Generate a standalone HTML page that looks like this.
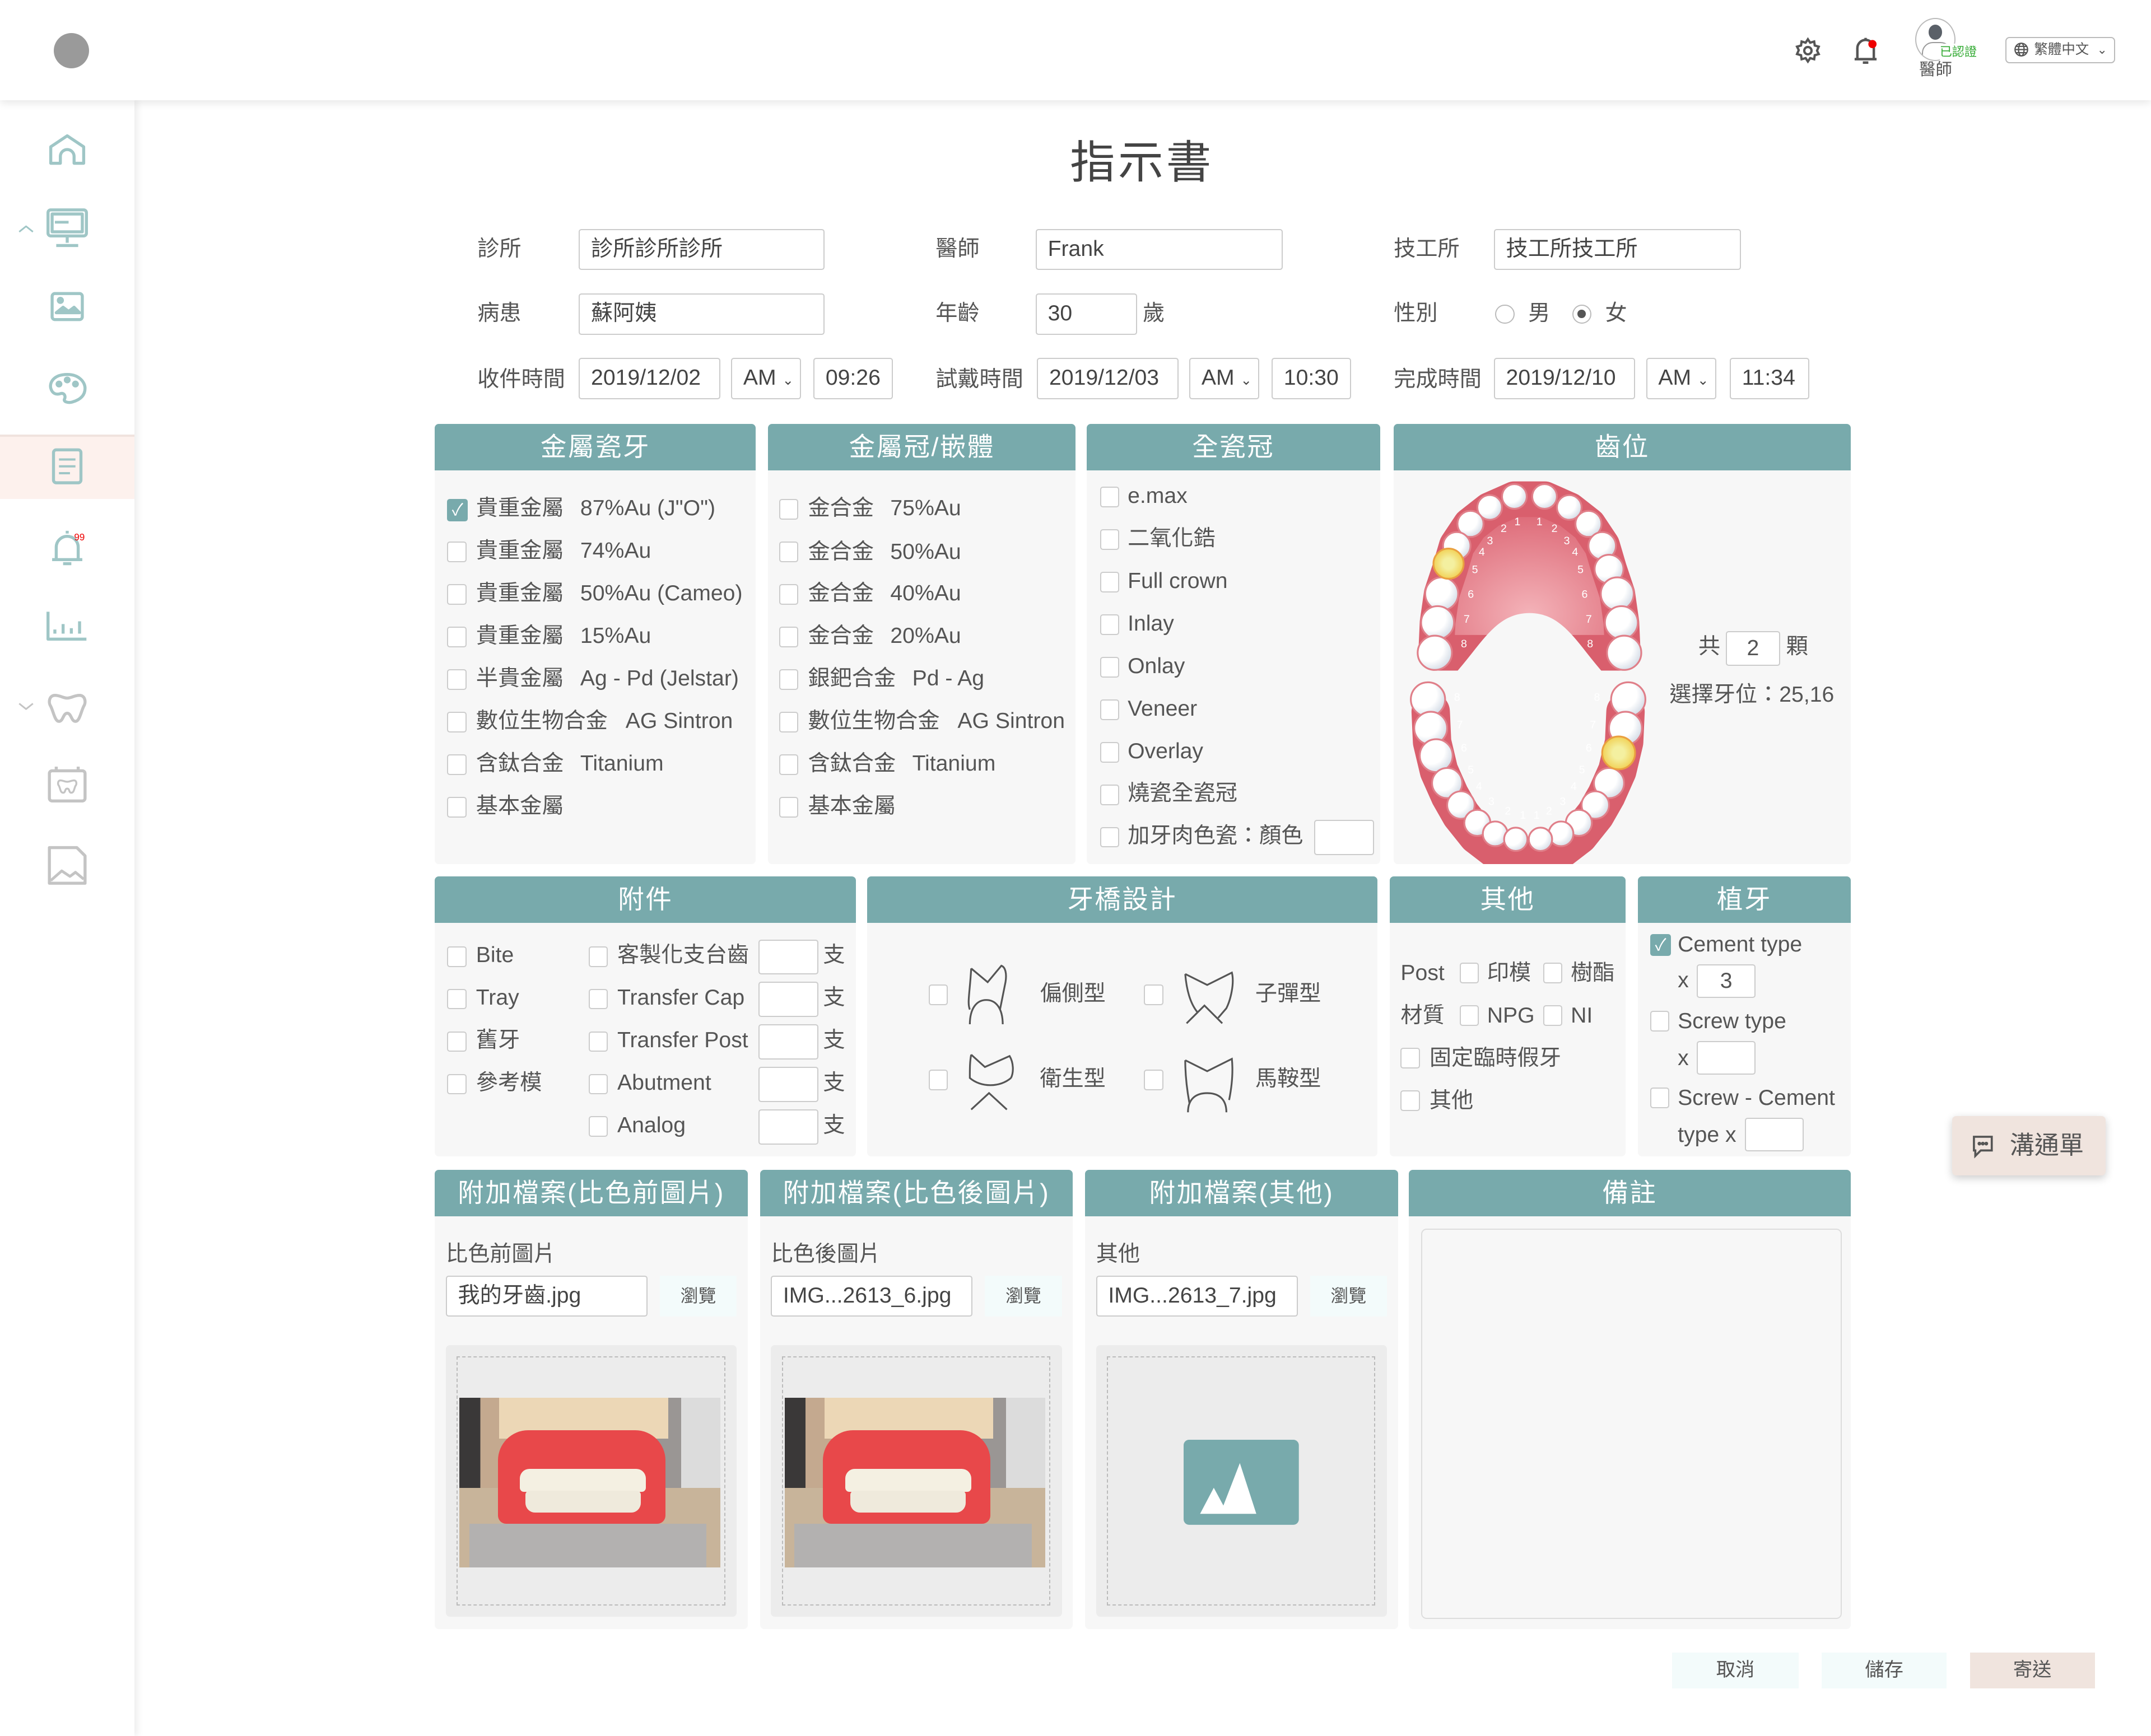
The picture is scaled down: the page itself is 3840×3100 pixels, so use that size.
<!DOCTYPE html>
<html><head><meta charset="utf-8">
<style>
html,body{margin:0;padding:0;background:#fff;overflow:hidden;width:3840px;height:3100px}
#r{zoom:2.449;width:1568px;height:1266px;position:relative;font-family:"Liberation Sans","Noto Sans CJK TC",sans-serif;color:#555;font-size:16px}
.a{position:absolute}
.t{position:absolute;white-space:nowrap;line-height:20px}
.inp{position:absolute;border:1px solid #ccc;border-radius:2px;background:#fff;height:30px;box-sizing:border-box;line-height:28px;padding-left:8px;color:#444;white-space:nowrap;font-size:16px}
.panel{position:absolute;background:#f7f7f7;border-radius:3px;overflow:hidden}
.hd{position:absolute;left:0;right:0;top:0;height:34px;background:#78aaac;color:#fff;font-size:19px;text-align:center;line-height:34px;font-weight:normal;letter-spacing:1px}
.cb{position:absolute;width:14px;height:15px;border:1px solid #ccc;border-radius:2px;background:#fff;box-sizing:border-box}
.ck{position:absolute;width:15px;height:16px;border-radius:2px;background:#78aaac;color:#fff;font-size:12px;line-height:16px;text-align:center}
.btn{position:absolute;height:26px;line-height:26px;text-align:center;font-size:14px;color:#555}
.ph{position:absolute;left:10px;top:38px;width:190px;height:124px;overflow:hidden;background:linear-gradient(90deg,#3a3838 0 8%,#c4a98f 8% 72%,#9a9694 72% 85%,#dcdcdc 85%)}
.ph div{position:absolute}
</style></head><body><div id="r">

<!-- top bar -->
<div class="a" style="left:0;top:0;width:1568px;height:73px;background:#fff;box-shadow:0 2px 6px rgba(0,0,0,.1);z-index:2"></div>
<div class="a" style="left:39px;top:24px;width:26px;height:26px;border-radius:50%;background:#9a9a9a;z-index:3"></div>
<svg class="a" style="left:1308px;top:27px;z-index:3" width="20" height="20" viewBox="0 0 24 24" fill="none" stroke="#555" stroke-width="2"><circle cx="12" cy="12" r="3.2"/><path d="M12 2l2 3 3.5-1 .5 3.5 3.5 1-1.5 3.5 1.5 3-3.5 1-.5 3.5-3.5-1-2 3-2-3-3.5 1-.5-3.5-3.5-1 1.5-3.5L2.5 8.5 6 7.5 6.5 4 10 5z"/></svg>
<svg class="a" style="left:1350px;top:26px;z-index:3" width="20" height="22" viewBox="0 0 20 22" fill="none" stroke="#555" stroke-width="1.8"><path d="M4 17V9a6 6 0 0 1 12 0v8M2 17h16M8 19.5h4M10 3V1.5"/><circle cx="15" cy="6" r="3" fill="#e00" stroke="none"/></svg>
<div class="a" style="left:1396px;top:13px;width:28px;height:30px;border-radius:50%;border:1px solid #bbb;background:#fff;z-index:3;overflow:hidden"><div class="a" style="left:9px;top:4px;width:10px;height:11px;border-radius:50%;background:#5a6068"></div><div class="a" style="left:4px;top:17px;width:20px;height:14px;border-radius:8px 8px 0 0;border:1px solid #999;background:#fff"></div></div>
<div class="t" style="left:1414px;top:32px;font-size:9px;color:#3a3;background:#fff;z-index:3;line-height:12px">已認證</div>
<div class="t" style="left:1399px;top:43px;font-size:12px;z-index:3;line-height:16px">醫師</div>
<div class="a" style="left:1462px;top:27px;width:80px;height:19px;border:1px solid #bbb;border-radius:3px;box-sizing:border-box;font-size:10px;line-height:17px;padding-left:20px;z-index:3;color:#555">繁體中文 <span style="font-size:9px;margin-left:3px">⌄</span><svg class="a" style="left:5px;top:3px" width="11" height="11" viewBox="0 0 12 12" fill="none" stroke="#555" stroke-width="1"><circle cx="6" cy="6" r="5"/><ellipse cx="6" cy="6" rx="2.2" ry="5"/><path d="M1 6h10M2 3.5h8M2 8.5h8"/></svg></div>

<!-- sidebar -->
<div class="a" style="left:0;top:73px;width:98px;height:1193px;background:#fff;box-shadow:2px 0 5px rgba(0,0,0,.08);z-index:1"></div>
<div class="a" style="left:0;top:317px;width:98px;height:45px;background:#fdf1ed;border-top:2px solid #f0e3de;z-index:1"></div>
<svg class="a" style="left:0;top:80px;z-index:2" width="98" height="580" viewBox="0 80 98 580" fill="none" stroke-width="2.2" stroke-linejoin="round">
 <g stroke="#9fc6c6">
 <path d="M37 119v-12l12-8 12 8v12h-7v-5a5 5 0 0 0-10 0v5z"/>
 <rect x="35" y="153" width="28" height="19" rx="2"/><rect x="38" y="156" width="22" height="13"/><path d="M49 172v5M41 179h16"/><path d="M40 162h10" stroke-width="2"/>
 <path d="M14 169l5-4 5 4" stroke-width="1.2"/>
 <rect x="38" y="214" width="22" height="19" rx="2"/><path d="M41 228l5-4 4 3 4-3 4 4z" fill="#9fc6c6"/><circle cx="44" cy="219" r="1.5" fill="#9fc6c6"/>
 <path d="M49 273c-10 0-13 6-12 10s4 5 7 4 4 2 3 4 3 3 6 2c7-2 9-6 9-10s-4-10-13-10z"/><circle cx="43" cy="280" r="1.4" fill="#9fc6c6"/><circle cx="49" cy="277" r="1.4" fill="#9fc6c6"/><circle cx="55" cy="280" r="1.4" fill="#9fc6c6"/>
 <rect x="39" y="328" width="20" height="24" rx="2"/><path d="M43 335h12M43 340h12M43 345h8" stroke-width="1.6"/>
 <path d="M41 408v-9a8 8 0 0 1 16 0v9M38 408h22M46 411h6M49 389v-2"/>
 <path d="M35 446v20h28M40 462v-3M46 462v-7M52 462v-4M58 462v-9"/>
 </g>
 <g stroke="#c4c4c4">
 <path d="M14 513l5 4 5-4" stroke-width="1.2"/>
 <path d="M40 507c-4 0-5 5-3 8 2 4 3 11 6 11s3-6 6-6 3 6 6 6 4-7 6-11c2-3 1-8-3-8-4 0-6 2-9 2s-5-2-9-2z"/>
 <rect x="36" y="562" width="26" height="22" rx="2"/><path d="M41 559v4M57 559v4"/><path d="M44 569c-2 0-2 3-1 4 1 2 1 5 3 5s1-3 3-3 1 3 3 3 2-3 3-5c1-1 1-4-1-4-2 0-3 1-5 1s-3-1-5-1z" stroke-width="1.4"/>
 <path d="M36 618v26h26v-20l-6-6z"/><path d="M37 642l8-7 6 4 4-3 6 5" stroke-width="2"/>
 </g>
 <text x="54" y="394" font-size="7" fill="#e00" stroke="none" font-family="Liberation Sans">99</text>
</svg>

<!-- title -->
<div class="t" style="left:780px;top:100px;font-size:33px;line-height:38px;color:#444;letter-spacing:2px">指示書</div>

<!-- form -->
<div class="t" style="left:348px;top:172px">診所</div>
<div class="inp" style="left:422px;top:167px;width:179px">診所診所診所</div>
<div class="t" style="left:682px;top:172px">醫師</div>
<div class="inp" style="left:755px;top:167px;width:180px">Frank</div>
<div class="t" style="left:1016px;top:172px">技工所</div>
<div class="inp" style="left:1089px;top:167px;width:180px">技工所技工所</div>

<div class="t" style="left:348px;top:219px">病患</div>
<div class="inp" style="left:422px;top:214px;width:179px">蘇阿姨</div>
<div class="t" style="left:682px;top:219px">年齡</div>
<div class="inp" style="left:755px;top:214px;width:74px">30</div>
<div class="t" style="left:833px;top:219px">歲</div>
<div class="t" style="left:1016px;top:219px">性別</div>
<div class="a" style="left:1090px;top:222px;width:14px;height:14px;border:1px solid #bbb;border-radius:50%;background:#fff;box-sizing:border-box"></div>
<div class="t" style="left:1114px;top:219px">男</div>
<div class="a" style="left:1146px;top:222px;width:14px;height:14px;border:1px solid #bbb;border-radius:50%;background:#fff;box-sizing:border-box"><div class="a" style="left:3px;top:3px;width:6px;height:6px;border-radius:50%;background:#555"></div></div>
<div class="t" style="left:1170px;top:219px">女</div>

<div class="t" style="left:348px;top:267px">收件時間</div>
<div class="inp" style="left:422px;top:261px;width:103px">2019/12/02</div>
<div class="inp" style="left:533px;top:261px;width:51px">AM <span style="font-size:10px">⌄</span></div>
<div class="inp" style="left:593px;top:261px;width:58px">09:26</div>
<div class="t" style="left:682px;top:267px">試戴時間</div>
<div class="inp" style="left:756px;top:261px;width:103px">2019/12/03</div>
<div class="inp" style="left:867px;top:261px;width:51px">AM <span style="font-size:10px">⌄</span></div>
<div class="inp" style="left:927px;top:261px;width:58px">10:30</div>
<div class="t" style="left:1016px;top:267px">完成時間</div>
<div class="inp" style="left:1089px;top:261px;width:103px">2019/12/10</div>
<div class="inp" style="left:1200px;top:261px;width:51px">AM <span style="font-size:10px">⌄</span></div>
<div class="inp" style="left:1261px;top:261px;width:58px">11:34</div>

<!-- row1 panels -->
<div class="panel" style="left:317px;top:309px;width:234px;height:321px"><div class="hd">金屬瓷牙</div>
<div class="ck" style="left:9px;top:55px">✓</div><div class="t" style="left:30px;top:52px">貴重金屬</div><div class="t" style="left:106px;top:52px">87%Au (J"O")</div>
<div class="cb" style="left:9px;top:86px"></div><div class="t" style="left:30px;top:83px">貴重金屬</div><div class="t" style="left:106px;top:83px">74%Au</div>
<div class="cb" style="left:9px;top:117px"></div><div class="t" style="left:30px;top:114px">貴重金屬</div><div class="t" style="left:106px;top:114px">50%Au (Cameo)</div>
<div class="cb" style="left:9px;top:148px"></div><div class="t" style="left:30px;top:145px">貴重金屬</div><div class="t" style="left:106px;top:145px">15%Au</div>
<div class="cb" style="left:9px;top:179px"></div><div class="t" style="left:30px;top:176px">半貴金屬</div><div class="t" style="left:106px;top:176px">Ag - Pd (Jelstar)</div>
<div class="cb" style="left:9px;top:210px"></div><div class="t" style="left:30px;top:207px">數位生物合金</div><div class="t" style="left:139px;top:207px">AG Sintron</div>
<div class="cb" style="left:9px;top:241px"></div><div class="t" style="left:30px;top:238px">含鈦合金</div><div class="t" style="left:106px;top:238px">Titanium</div>
<div class="cb" style="left:9px;top:272px"></div><div class="t" style="left:30px;top:269px">基本金屬</div>
</div>
<div class="panel" style="left:560px;top:309px;width:224px;height:321px"><div class="hd">金屬冠/嵌體</div>
<div class="cb" style="left:8px;top:55px"></div><div class="t" style="left:29px;top:52px">金合金</div><div class="t" style="left:89px;top:52px">75%Au</div>
<div class="cb" style="left:8px;top:86px"></div><div class="t" style="left:29px;top:84px">金合金</div><div class="t" style="left:89px;top:84px">50%Au</div>
<div class="cb" style="left:8px;top:117px"></div><div class="t" style="left:29px;top:114px">金合金</div><div class="t" style="left:89px;top:114px">40%Au</div>
<div class="cb" style="left:8px;top:148px"></div><div class="t" style="left:29px;top:145px">金合金</div><div class="t" style="left:89px;top:145px">20%Au</div>
<div class="cb" style="left:8px;top:179px"></div><div class="t" style="left:29px;top:176px">銀鈀合金</div><div class="t" style="left:105px;top:176px">Pd - Ag</div>
<div class="cb" style="left:8px;top:210px"></div><div class="t" style="left:29px;top:207px">數位生物合金</div><div class="t" style="left:138px;top:207px">AG Sintron</div>
<div class="cb" style="left:8px;top:241px"></div><div class="t" style="left:29px;top:238px">含鈦合金</div><div class="t" style="left:105px;top:238px">Titanium</div>
<div class="cb" style="left:8px;top:272px"></div><div class="t" style="left:29px;top:269px">基本金屬</div>
</div>
<div class="panel" style="left:792px;top:309px;width:214px;height:321px"><div class="hd">全瓷冠</div>
<div class="cb" style="left:10px;top:46px"></div><div class="t" style="left:30px;top:43px">e.max</div>
<div class="cb" style="left:10px;top:77px"></div><div class="t" style="left:30px;top:74px">二氧化鋯</div>
<div class="cb" style="left:10px;top:108px"></div><div class="t" style="left:30px;top:105px">Full crown</div>
<div class="cb" style="left:10px;top:139px"></div><div class="t" style="left:30px;top:136px">Inlay</div>
<div class="cb" style="left:10px;top:170px"></div><div class="t" style="left:30px;top:167px">Onlay</div>
<div class="cb" style="left:10px;top:201px"></div><div class="t" style="left:30px;top:198px">Veneer</div>
<div class="cb" style="left:10px;top:232px"></div><div class="t" style="left:30px;top:229px">Overlay</div>
<div class="cb" style="left:10px;top:263px"></div><div class="t" style="left:30px;top:260px">燒瓷全瓷冠</div>
<div class="cb" style="left:10px;top:294px"></div><div class="t" style="left:30px;top:291px">加牙肉色瓷：顏色</div>
<div class="a" style="left:166px;top:289px;width:42px;height:24px;border:1px solid #ccc;border-radius:2px;background:#fff"></div>
</div>
<div class="panel" style="left:1016px;top:309px;width:333px;height:321px"><div class="hd">齒位</div>
<div class="t" style="left:222px;top:153px">共</div>
<div class="a" style="left:242px;top:151px;width:38px;height:24px;border:1px solid #ccc;border-radius:2px;background:#fff;text-align:center;line-height:24px">2</div>
<div class="t" style="left:286px;top:153px">顆</div>
<div class="t" style="left:201px;top:188px">選擇牙位：25,16</div>
</div>
<svg class="a" style="left:1016px;top:343px" width="200" height="287" viewBox="1016 343 200 287">
<defs><radialGradient id="pg" cx="0.5" cy="0.75" r="0.7"><stop offset="0" stop-color="#f4b3b9"/><stop offset="1" stop-color="#dc6674"/></radialGradient>
<radialGradient id="tg" cx="0.35" cy="0.35" r="0.8"><stop offset="0.5" stop-color="#fff"/><stop offset="1" stop-color="#c6d0de"/></radialGradient>
<radialGradient id="yg" cx="0.5" cy="0.5" r="0.6"><stop offset="0.3" stop-color="#f4f0a0"/><stop offset="1" stop-color="#f0c840"/></radialGradient></defs>
<path d="M1047 476 L1048 454 L1051 433 L1057 415 L1062 398 L1072 383 L1086 372 L1104 364 L1126 364 L1144 372 L1158 383 L1168 398 L1173 415 L1179 433 L1182 454 L1183 476 Z" fill="url(#pg)" stroke="#d95f6d" stroke-width="26" stroke-linejoin="round"/>
<path d="M1060 492 C1080 470 1090 447 1115 447 C1140 447 1150 470 1170 492 Z" fill="#f7f7f7"/>
<g transform="translate(0,-6)">
<path d="M1043 525 L1044 547 L1049 568 L1057 586 L1065 600 L1077 615 L1090 625 L1106 630 L1122 630 L1138 625 L1151 615 L1163 600 L1171 586 L1179 568 L1184 547 L1185 525" fill="none" stroke="#d95f6d" stroke-width="28" stroke-linejoin="round" stroke-linecap="round"/>
<g stroke="#e07f89" stroke-width="1.3" fill="url(#tg)">
<circle cx="1041" cy="516" r="12.5"/><circle cx="1187" cy="516" r="12.5"/><circle cx="1043" cy="537" r="12"/><circle cx="1185" cy="537" r="12"/>
<circle cx="1047" cy="557" r="12"/><circle cx="1055" cy="577" r="11"/><circle cx="1173" cy="577" r="11"/>
<circle cx="1065" cy="593" r="10"/><circle cx="1163" cy="593" r="10"/><circle cx="1077" cy="606" r="9.5"/><circle cx="1151" cy="606" r="9.5"/>
<circle cx="1090" cy="614" r="9"/><circle cx="1138" cy="614" r="9"/><circle cx="1105" cy="618" r="8.5"/><circle cx="1123" cy="618" r="8.5"/>
<circle cx="1180" cy="555" r="12" fill="url(#yg)" stroke="#eaa040"/>
</g>
<g fill="#fff" font-size="8" font-family="Liberation Sans"><text x="1060" y="517">8</text><text x="1162" y="517">8</text><text x="1062" y="537">7</text><text x="1159" y="537">7</text><text x="1065" y="554">6</text><text x="1156" y="554">6</text><text x="1070" y="570">5</text><text x="1151" y="570">5</text><text x="1076" y="582">4</text><text x="1145" y="582">4</text><text x="1085" y="593">3</text><text x="1137" y="593">3</text><text x="1097" y="600">2</text><text x="1127" y="600">2</text><text x="1108" y="603">1</text><text x="1118" y="603">1</text></g>
</g>
<g stroke="#e07f89" stroke-width="1.3" fill="url(#tg)">
<circle cx="1104" cy="362" r="9"/><circle cx="1126" cy="362" r="9"/><circle cx="1086" cy="370" r="9"/><circle cx="1144" cy="370" r="9"/>
<circle cx="1072" cy="382" r="9.5"/><circle cx="1158" cy="382" r="9.5"/><circle cx="1062" cy="398" r="10"/><circle cx="1168" cy="398" r="10"/>
<circle cx="1173" cy="415" r="10.5"/><circle cx="1051" cy="433" r="12"/><circle cx="1179" cy="433" r="12"/>
<circle cx="1048" cy="454" r="12"/><circle cx="1182" cy="454" r="12"/><circle cx="1046" cy="476" r="12.5"/><circle cx="1184" cy="476" r="12.5"/>
<circle cx="1056" cy="411" r="11" fill="url(#yg)" stroke="#eaa040"/>
</g>
<g fill="#fff" font-size="8" font-family="Liberation Sans"><text x="1104" y="383">1</text><text x="1120" y="383">1</text><text x="1094" y="388">2</text><text x="1131" y="388">2</text><text x="1084" y="397">3</text><text x="1140" y="397">3</text><text x="1078" y="405">4</text><text x="1146" y="405">4</text><text x="1073" y="418">5</text><text x="1150" y="418">5</text><text x="1070" y="436">6</text><text x="1153" y="436">6</text><text x="1067" y="454">7</text><text x="1156" y="454">7</text><text x="1065" y="472">8</text><text x="1157" y="472">8</text></g>
</svg>

<!-- row2 -->
<div class="panel" style="left:317px;top:639px;width:307px;height:204px"><div class="hd">附件</div>
<div class="cb" style="left:9px;top:51px"></div><div class="t" style="left:30px;top:48px">Bite</div>
<div class="cb" style="left:9px;top:82px"></div><div class="t" style="left:30px;top:79px">Tray</div>
<div class="cb" style="left:9px;top:113px"></div><div class="t" style="left:30px;top:110px">舊牙</div>
<div class="cb" style="left:9px;top:144px"></div><div class="t" style="left:30px;top:141px">參考模</div>
<div class="cb" style="left:112px;top:51px"></div><div class="t" style="left:133px;top:48px">客製化支台齒</div>
<div class="cb" style="left:112px;top:82px"></div><div class="t" style="left:133px;top:79px">Transfer Cap</div>
<div class="cb" style="left:112px;top:113px"></div><div class="t" style="left:133px;top:110px">Transfer Post</div>
<div class="cb" style="left:112px;top:144px"></div><div class="t" style="left:133px;top:141px">Abutment</div>
<div class="cb" style="left:112px;top:175px"></div><div class="t" style="left:133px;top:172px">Analog</div>
<div class="a" style="left:236px;top:46px;width:42px;height:24px;border:1px solid #ccc;border-radius:2px;background:#fff"></div><div class="t" style="left:283px;top:48px">支</div>
<div class="a" style="left:236px;top:77px;width:42px;height:24px;border:1px solid #ccc;border-radius:2px;background:#fff"></div><div class="t" style="left:283px;top:79px">支</div>
<div class="a" style="left:236px;top:108px;width:42px;height:24px;border:1px solid #ccc;border-radius:2px;background:#fff"></div><div class="t" style="left:283px;top:110px">支</div>
<div class="a" style="left:236px;top:139px;width:42px;height:24px;border:1px solid #ccc;border-radius:2px;background:#fff"></div><div class="t" style="left:283px;top:141px">支</div>
<div class="a" style="left:236px;top:170px;width:42px;height:24px;border:1px solid #ccc;border-radius:2px;background:#fff"></div><div class="t" style="left:283px;top:172px">支</div>
</div>
<div class="panel" style="left:632px;top:639px;width:372px;height:204px"><div class="hd">牙橋設計</div>
<div class="cb" style="left:45px;top:79px"></div><div class="t" style="left:126px;top:76px">偏側型</div>
<div class="cb" style="left:202px;top:79px"></div><div class="t" style="left:283px;top:76px">子彈型</div>
<div class="cb" style="left:45px;top:141px"></div><div class="t" style="left:126px;top:138px">衛生型</div>
<div class="cb" style="left:202px;top:141px"></div><div class="t" style="left:283px;top:138px">馬鞍型</div>
<svg class="a" style="left:72px;top:64px" width="45" height="44" viewBox="0 0 45 44" fill="none" stroke="#555" stroke-width="1.3"><path d="M4 3l12 10 10-12c3 1 4 6 3 12l-4 20M3 33c-2-5 0-12 1-30"/><path d="M3 44c0-12 5-18 12-18s12 6 12 18"/></svg>
<svg class="a" style="left:230px;top:66px" width="45" height="44" viewBox="0 0 45 44" fill="none" stroke="#555" stroke-width="1.3"><path d="M2 5l16 8 18-9c2 8-1 20-4 26l-6 7M2 5c1 12 4 22 9 28"/><path d="M3 41l13-13 13 13"/></svg>
<svg class="a" style="left:72px;top:127px" width="45" height="44" viewBox="0 0 45 44" fill="none" stroke="#555" stroke-width="1.3"><path d="M4 3l10 9 18-8c3 5 3 12 1 16M4 3c-1 5-1 10-1 17 8 7 22 7 30 0"/><path d="M4 43l13-12 13 12"/></svg>
<svg class="a" style="left:230px;top:129px" width="45" height="44" viewBox="0 0 45 44" fill="none" stroke="#555" stroke-width="1.3"><path d="M2 5l16 8 18-9c1 10 0 20-2 30M2 5c0 10 1 20 3 31"/><path d="M4 43c0-10 6-14 14-14s14 4 14 14"/></svg>
</div>
<div class="panel" style="left:1013px;top:639px;width:172px;height:204px"><div class="hd">其他</div>
<div class="t" style="left:8px;top:61px">Post</div><div class="cb" style="left:51px;top:63px"></div><div class="t" style="left:71px;top:61px">印模</div><div class="cb" style="left:112px;top:63px"></div><div class="t" style="left:132px;top:61px">樹酯</div>
<div class="t" style="left:8px;top:92px">材質</div><div class="cb" style="left:51px;top:94px"></div><div class="t" style="left:71px;top:92px">NPG</div><div class="cb" style="left:112px;top:94px"></div><div class="t" style="left:132px;top:92px">NI</div>
<div class="cb" style="left:8px;top:125px"></div><div class="t" style="left:29px;top:123px">固定臨時假牙</div>
<div class="cb" style="left:8px;top:156px"></div><div class="t" style="left:29px;top:154px">其他</div>
</div>
<div class="panel" style="left:1194px;top:639px;width:155px;height:204px"><div class="hd">植牙</div>
<div class="ck" style="left:9px;top:42px">✓</div><div class="t" style="left:29px;top:40px">Cement type</div>
<div class="t" style="left:29px;top:66px">x</div><div class="a" style="left:43px;top:64px;width:41px;height:23px;border:1px solid #ccc;border-radius:2px;background:#fff;text-align:center;line-height:23px">3</div>
<div class="cb" style="left:9px;top:98px"></div><div class="t" style="left:29px;top:96px">Screw type</div>
<div class="t" style="left:29px;top:123px">x</div><div class="a" style="left:43px;top:120px;width:41px;height:23px;border:1px solid #ccc;border-radius:2px;background:#fff"></div>
<div class="cb" style="left:9px;top:154px"></div><div class="t" style="left:29px;top:152px">Screw - Cement</div>
<div class="t" style="left:29px;top:179px">type x</div><div class="a" style="left:78px;top:176px;width:41px;height:23px;border:1px solid #ccc;border-radius:2px;background:#fff"></div>
</div>

<!-- 溝通單 -->
<div class="a" style="left:1423px;top:814px;width:112px;height:43px;background:#f0e4de;border-radius:3px;box-shadow:0 2px 6px rgba(0,0,0,.2);font-size:18px;line-height:43px;color:#555"><svg class="a" style="left:14px;top:13px" width="17" height="18" viewBox="0 0 17 18" fill="none" stroke="#555" stroke-width="1.5"><path d="M2 2h13v10H7l-4 4v-4H2z"/><circle cx="6" cy="7" r=".6" fill="#555"/><circle cx="8.5" cy="7" r=".6" fill="#555"/><circle cx="11" cy="7" r=".6" fill="#555"/></svg><span style="position:absolute;left:42px">溝通單</span></div>

<!-- row3 -->
<div class="panel" style="left:317px;top:853px;width:228px;height:335px"><div class="hd">附加檔案(比色前圖片)</div>
<div class="t" style="left:8px;top:52px">比色前圖片</div>
<div class="inp" style="left:8px;top:77px;width:147px">我的牙齒.jpg</div>
<div class="a" style="left:164px;top:77px;width:56px;height:30px;background:#f3fbfb;text-align:center;line-height:30px;font-size:13px">瀏覽</div>
<div class="a" style="left:8px;top:128px;width:212px;height:198px;background:#ececec;border-radius:3px"><div class="a" style="left:8px;top:8px;width:194px;height:180px;border:1px dashed #bbb"></div>
<div class="ph"><div style="left:0;top:66px;width:190px;height:58px;background:#c8b49a"></div><div style="left:29px;top:0;width:123px;height:30px;background:#ecd7b6"></div><div style="left:28px;top:24px;width:122px;height:68px;background:#e8484a;border-radius:22px 22px 6px 6px"></div><div style="left:44px;top:52px;width:92px;height:17px;background:#f4f0e2;border-radius:7px 7px 3px 3px"></div><div style="left:48px;top:68px;width:84px;height:16px;background:#efeadc;border-radius:3px 3px 7px 7px"></div><div style="left:7px;top:92px;width:173px;height:32px;background:#b3b1b0"></div></div></div>
</div>
<div class="panel" style="left:554px;top:853px;width:228px;height:335px"><div class="hd">附加檔案(比色後圖片)</div>
<div class="t" style="left:8px;top:52px">比色後圖片</div>
<div class="inp" style="left:8px;top:77px;width:147px">IMG...2613_6.jpg</div>
<div class="a" style="left:164px;top:77px;width:56px;height:30px;background:#f3fbfb;text-align:center;line-height:30px;font-size:13px">瀏覽</div>
<div class="a" style="left:8px;top:128px;width:212px;height:198px;background:#ececec;border-radius:3px"><div class="a" style="left:8px;top:8px;width:194px;height:180px;border:1px dashed #bbb"></div>
<div class="ph"><div style="left:0;top:66px;width:190px;height:58px;background:#c8b49a"></div><div style="left:29px;top:0;width:123px;height:30px;background:#ecd7b6"></div><div style="left:28px;top:24px;width:122px;height:68px;background:#e8484a;border-radius:22px 22px 6px 6px"></div><div style="left:44px;top:52px;width:92px;height:17px;background:#f4f0e2;border-radius:7px 7px 3px 3px"></div><div style="left:48px;top:68px;width:84px;height:16px;background:#efeadc;border-radius:3px 3px 7px 7px"></div><div style="left:7px;top:92px;width:173px;height:32px;background:#b3b1b0"></div></div></div>
</div>
<div class="panel" style="left:791px;top:853px;width:228px;height:335px"><div class="hd">附加檔案(其他)</div>
<div class="t" style="left:8px;top:52px">其他</div>
<div class="inp" style="left:8px;top:77px;width:147px">IMG...2613_7.jpg</div>
<div class="a" style="left:164px;top:77px;width:56px;height:30px;background:#f3fbfb;text-align:center;line-height:30px;font-size:13px">瀏覽</div>
<div class="a" style="left:8px;top:128px;width:212px;height:198px;background:#ececec;border-radius:3px"><div class="a" style="left:8px;top:8px;width:194px;height:180px;border:1px dashed #bbb"></div>
<svg class="a" style="left:64px;top:69px" width="84" height="62" viewBox="0 0 84 62"><rect width="84" height="62" rx="4" fill="#78aaac"/><path d="M12 54l10-19 7 13 12-31 12 37z" fill="#fff"/></svg></div>
</div>
<div class="panel" style="left:1027px;top:853px;width:322px;height:335px"><div class="hd">備註</div>
<div class="a" style="left:9px;top:43px;width:305px;height:283px;border:1px solid #ddd;border-radius:4px;background:#f7f7f7"></div>
</div>

<div class="btn" style="left:1219px;top:1205px;width:92px;background:#f3fbfb">取消</div>
<div class="btn" style="left:1328px;top:1205px;width:91px;background:#f3fbfb">儲存</div>
<div class="btn" style="left:1436px;top:1205px;width:91px;background:#f0e4de">寄送</div>

</div></body></html>
